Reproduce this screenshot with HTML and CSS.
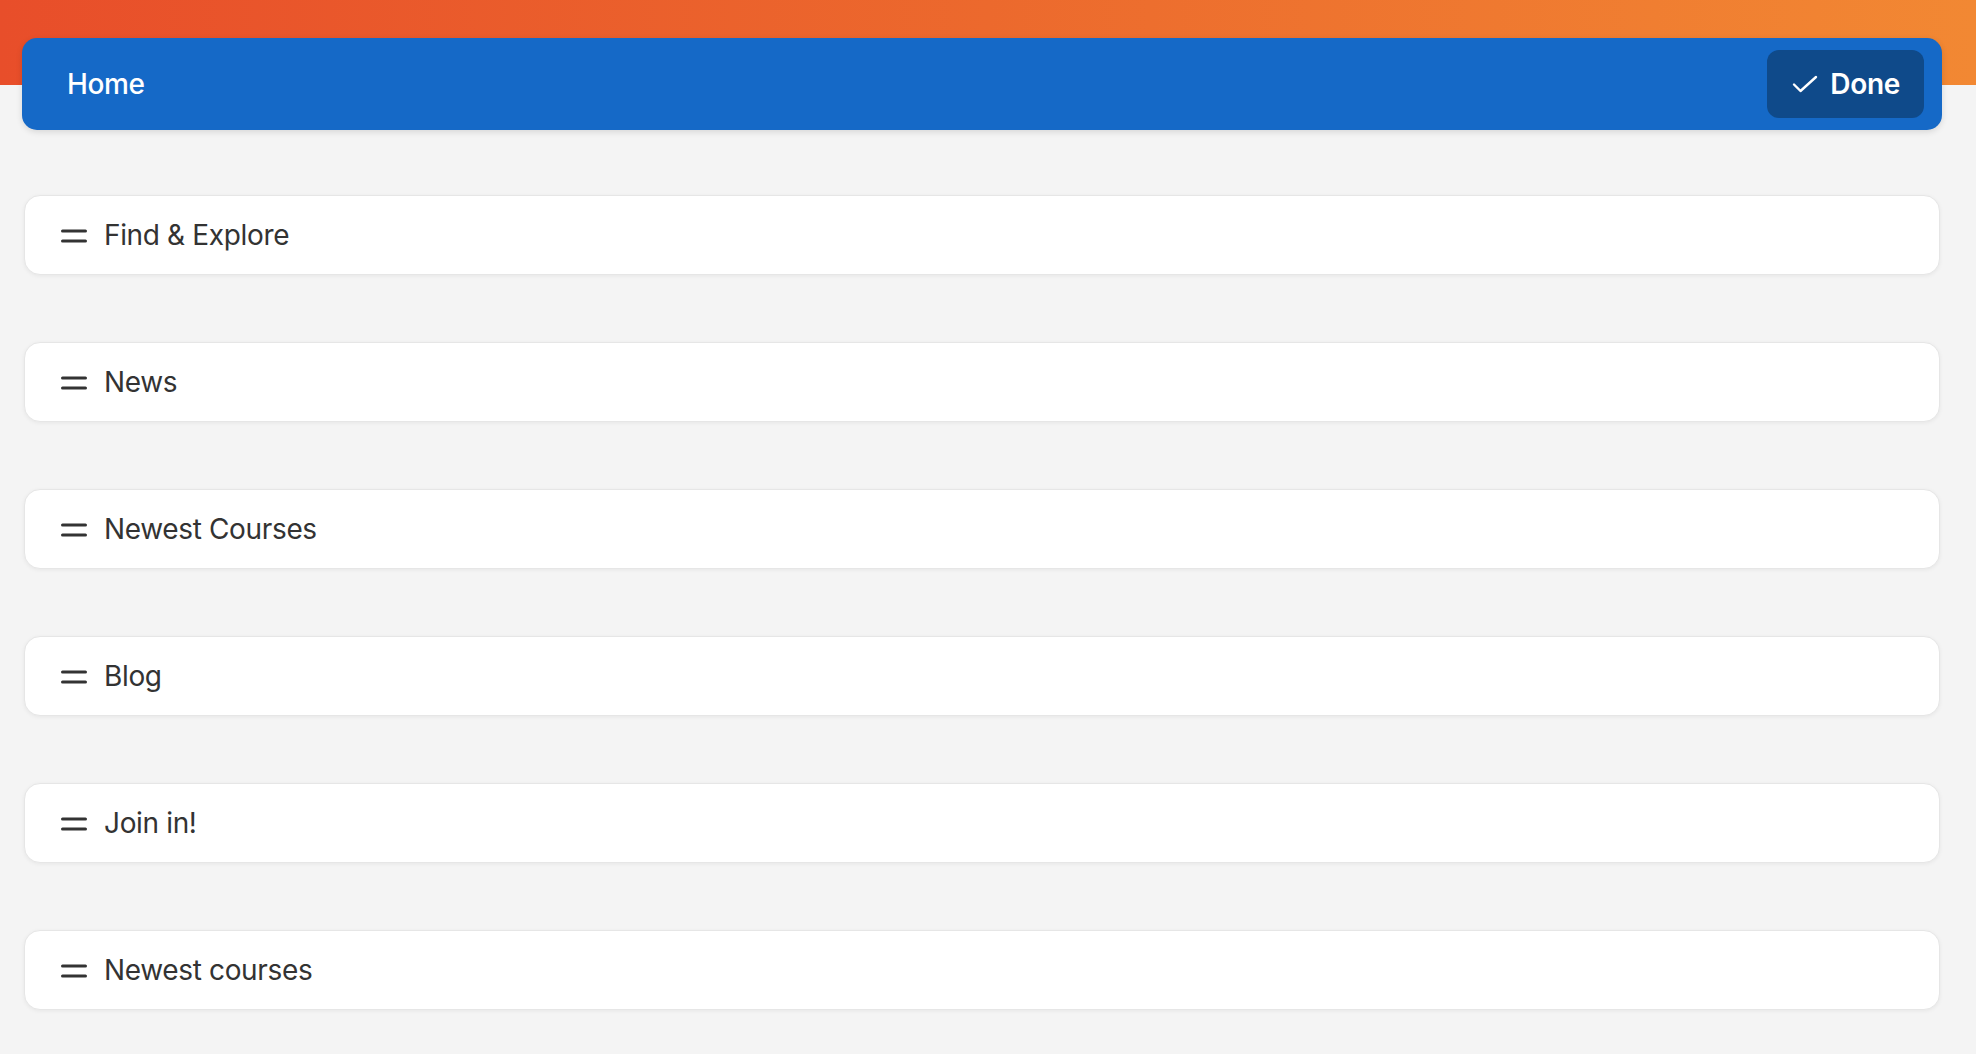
FILE: index.html
```html
<!DOCTYPE html>
<html lang="en">
<head>
  <meta charset="UTF-8">
  <title>Home</title>
  <meta name="viewport" content="width=device-width, initial-scale=1.0" />
  <link rel="stylesheet" href="styles.css">
</head>
<body>
  <div class="page">
    <div class="topbar">
      <span class="title">Home</span>
      <button class="done" type="button">
        <svg width="26" height="18" viewBox="0 0 26 18" fill="none" stroke="#fff" stroke-width="2.4" stroke-linecap="round" stroke-linejoin="round">
          <path d="M2 9.5 L8.5 16 L24 2"/>
        </svg>
        Done
      </button>
    </div>

    <div class="list">
      <div class="item">
        <svg class="handle" width="26" height="14" viewBox="0 0 26 14"><path d="M1.5 2 H24.5 M1.5 12 H24.5"/></svg>
        <span class="label">Find &amp; Explore</span>
      </div>
      <div class="item">
        <svg class="handle" width="26" height="14" viewBox="0 0 26 14"><path d="M1.5 2 H24.5 M1.5 12 H24.5"/></svg>
        <span class="label">News</span>
      </div>
      <div class="item">
        <svg class="handle" width="26" height="14" viewBox="0 0 26 14"><path d="M1.5 2 H24.5 M1.5 12 H24.5"/></svg>
        <span class="label">Newest Courses</span>
      </div>
      <div class="item">
        <svg class="handle" width="26" height="14" viewBox="0 0 26 14"><path d="M1.5 2 H24.5 M1.5 12 H24.5"/></svg>
        <span class="label">Blog</span>
      </div>
      <div class="item">
        <svg class="handle" width="26" height="14" viewBox="0 0 26 14"><path d="M1.5 2 H24.5 M1.5 12 H24.5"/></svg>
        <span class="label">Join in!</span>
      </div>
      <div class="item">
        <svg class="handle" width="26" height="14" viewBox="0 0 26 14"><path d="M1.5 2 H24.5 M1.5 12 H24.5"/></svg>
        <span class="label">Newest courses</span>
      </div>
    </div>
  </div>
</body>
</html>
```

FILE: styles.css
```css
html, body {
    margin: 0;
    height: 100%;
}

body {
    background-color: #f4f4f4;
    font-family: Inter, "Noto Sans", "Liberation Sans", sans-serif;
    color: #333;
}

.page {
    padding: 38px 34px 0 22px;
    background: linear-gradient(to right, #e84e2a, #ec692d 50%, #f28833) no-repeat;
    background-size: 100% 85px;
}

.topbar {
    display: flex;
    align-items: center;
    justify-content: space-between;
    height: 92px;
    padding: 0 18px 0 45px;
    background-color: #1569c7;
    border-radius: 15px;
    box-shadow: 0 2px 6px rgba(0, 0, 0, 0.12);
}

.topbar .title {
    color: #fff;
    font-size: 28px;
    font-weight: 500;
    letter-spacing: -0.4px;
}

.done {
    display: flex;
    align-items: center;
    gap: 12px;
    height: 68px;
    padding: 0 24px 0 25px;
    border: none;
    border-radius: 12px;
    background-color: #0f4a8a;
    color: #fff;
    font-family: inherit;
    font-size: 28px;
    font-weight: 600;
    letter-spacing: -0.3px;
}

.list {
    display: flex;
    flex-direction: column;
    gap: 67px;
    margin: 65px 2px 0 2px;
}

.item {
    display: flex;
    align-items: center;
    gap: 17px;
    height: 78px;
    padding: 0 36px;
    background-color: #fff;
    border: 1px solid #e6e6e6;
    border-radius: 16px;
    box-shadow: 0 1px 4px rgba(0, 0, 0, 0.06);
}

.handle {
    stroke: #333;
    stroke-width: 3;
    stroke-linecap: round;
    fill: none;
    margin-top: 2px;
}

.label {
    font-size: 28px;
    letter-spacing: -0.35px;
}
```
